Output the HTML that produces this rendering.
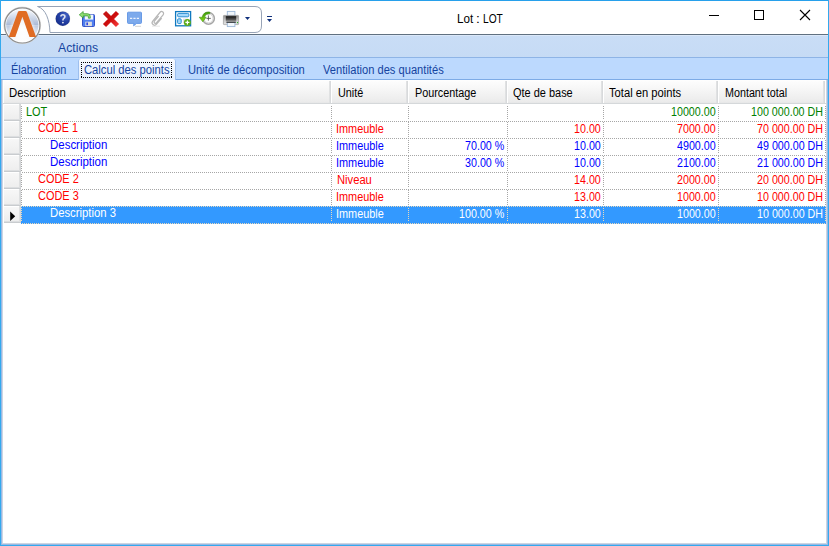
<!DOCTYPE html>
<html><head><meta charset="utf-8"><title>Lot : LOT</title>
<style>
html,body{margin:0;padding:0;background:#fff;}
#win{position:relative;width:829px;height:546px;overflow:hidden;background:#fff;font-family:"Liberation Sans",sans-serif;}
#win div,#win svg{position:absolute;}
.t{font-size:12px;line-height:20px;height:20px;white-space:nowrap;transform-origin:0 0;}
/* dotted grid lines: checkerboard (x+y odd) */
.hd{height:1px;background-image:linear-gradient(90deg,#a6a6a6 50%,rgba(0,0,0,0) 50%);background-size:2px 1px;}
.vd{width:1px;background-image:linear-gradient(180deg,#a6a6a6 50%,rgba(0,0,0,0) 50%);background-size:1px 2px;}
.hd.s{background-image:linear-gradient(90deg,#e9d9b9 50%,rgba(0,0,0,0) 50%);}
.vd.s{background-image:linear-gradient(180deg,#e9d9b9 50%,rgba(0,0,0,0) 50%);}
.rh{left:3px;width:18px;height:17px;background:linear-gradient(180deg,#ffffff 0,#ffffff 1px,#f7f7f7 1px,#eeeeee 15px,#dcdee0 15.5px,#c9cccf 16px,#c9cccf 17px);}
.rh:before{content:"";position:absolute;left:0;top:0;width:1px;height:17px;background:#fff;}
.rh:after{content:"";position:absolute;right:0;top:0;width:2px;height:16px;background:linear-gradient(90deg,#e2e3e4,#d0d2d4);}
.hc{top:80px;height:24px;background:linear-gradient(180deg,#ffffff 0,#fdfdfd 1px,#f4f4f4 12px,#ebebeb 22px,#e4e5e6 23px,#d5d8da 23px,#d5d8da 24px);}
.hs{top:81px;height:22px;width:2px;background:linear-gradient(90deg,#e4e5e6,#d4d6d8);}
.hw{top:80px;height:23px;width:1px;background:#fff;}
</style></head><body>
<div id="win">
<!-- title bar -->
<div style="left:0;top:0;width:829px;height:34px;background:#fff"></div>
<div style="left:0;top:34px;width:829px;height:1px;background:#607080"></div>
<!-- menu zone -->
<div style="left:0;top:35px;width:829px;height:22px;background:linear-gradient(180deg,#dbe8f9 0,#dbe8f9 1px,#c9ddf6 1px,#c6dbf5 22px)"></div>
<div style="left:0;top:57px;width:829px;height:1px;background:#8eb4e6"></div>
<!-- tab zone -->
<div style="left:0;top:58px;width:829px;height:21px;background:#bcd9fe"></div>
<div style="left:0;top:79px;width:829px;height:1px;background:#7dabe6"></div>
<!-- selected tab -->
<div style="left:78px;top:59px;width:98px;height:21px;background:#9dbfee;border-radius:3px 3px 0 0"></div>
<div style="left:79px;top:59px;width:96px;height:21px;background:linear-gradient(180deg,#ffffff 0,#f3f7fe 3px,#e6effc 21px);border-radius:2px 2px 0 0"></div>
<!-- focus rect -->
<div class="hd" style="left:81px;top:62px;width:91px;background-image:linear-gradient(90deg,#000 50%,rgba(0,0,0,0) 50%)"></div>
<div class="hd" style="left:81px;top:77px;width:91px;background-image:linear-gradient(90deg,#000 50%,rgba(0,0,0,0) 50%)"></div>
<div class="vd" style="left:81px;top:62px;height:16px;background-image:linear-gradient(180deg,#000 50%,rgba(0,0,0,0) 50%)"></div>
<div class="vd" style="left:171px;top:62px;height:16px;background-image:linear-gradient(180deg,#000 50%,rgba(0,0,0,0) 50%)"></div>

<!-- grid header -->
<div class="hc" style="left:3px;width:823px"></div>
<div class="hs" style="left:329px"></div><div class="hw" style="left:331px"></div>
<div class="hs" style="left:406px"></div><div class="hw" style="left:408px"></div>
<div class="hs" style="left:505px"></div><div class="hw" style="left:507px"></div>
<div class="hs" style="left:601px"></div><div class="hw" style="left:603px"></div>
<div class="hs" style="left:716px"></div><div class="hw" style="left:718px"></div>
<div class="hs" style="left:823px"></div><div class="hw" style="left:825px;width:1px"></div>
<div class="hw" style="left:3px"></div>

<!-- row headers -->
<div class="rh" style="top:104px"></div>
<div class="rh" style="top:121px"></div>
<div class="rh" style="top:138px"></div>
<div class="rh" style="top:155px"></div>
<div class="rh" style="top:172px"></div>
<div class="rh" style="top:189px"></div>
<div class="rh" style="top:206px"></div>
<!-- current row arrow -->
<svg style="left:9px;top:211px" width="8" height="11" viewBox="0 0 8 11"><path d="M1.2 0.6 L6.2 5.3 L1.2 10 Z" fill="#000"/></svg>

<!-- selected row -->
<div style="left:21px;top:206px;width:805px;height:18px;background:#3399ff"></div>

<div class="hd" style="left:22px;top:121px;width:803px"></div>
<div class="hd" style="left:22px;top:138px;width:803px"></div>
<div class="hd" style="left:22px;top:155px;width:803px"></div>
<div class="hd" style="left:22px;top:172px;width:803px"></div>
<div class="hd" style="left:22px;top:189px;width:803px"></div>
<div class="hd s" style="left:21px;top:206px;width:805px"></div>
<div class="hd s" style="left:22px;top:223px;width:804px"></div>
<div class="vd" style="left:21px;top:106px;height:13px"></div>
<div class="vd" style="left:21px;top:122px;height:15px"></div>
<div class="vd" style="left:21px;top:140px;height:13px"></div>
<div class="vd" style="left:21px;top:156px;height:15px"></div>
<div class="vd" style="left:21px;top:174px;height:13px"></div>
<div class="vd" style="left:21px;top:190px;height:15px"></div>
<div class="vd s" style="left:21px;top:208px;height:13px"></div>
<div class="vd" style="left:331px;top:106px;height:13px"></div>
<div class="vd" style="left:331px;top:122px;height:15px"></div>
<div class="vd" style="left:331px;top:140px;height:13px"></div>
<div class="vd" style="left:331px;top:156px;height:15px"></div>
<div class="vd" style="left:331px;top:174px;height:13px"></div>
<div class="vd" style="left:331px;top:190px;height:15px"></div>
<div class="vd s" style="left:331px;top:208px;height:13px"></div>
<div class="vd" style="left:408px;top:106px;height:13px"></div>
<div class="vd" style="left:408px;top:122px;height:15px"></div>
<div class="vd" style="left:408px;top:140px;height:13px"></div>
<div class="vd" style="left:408px;top:156px;height:15px"></div>
<div class="vd" style="left:408px;top:174px;height:13px"></div>
<div class="vd" style="left:408px;top:190px;height:15px"></div>
<div class="vd s" style="left:408px;top:208px;height:13px"></div>
<div class="vd" style="left:507px;top:106px;height:13px"></div>
<div class="vd" style="left:507px;top:122px;height:15px"></div>
<div class="vd" style="left:507px;top:140px;height:13px"></div>
<div class="vd" style="left:507px;top:156px;height:15px"></div>
<div class="vd" style="left:507px;top:174px;height:13px"></div>
<div class="vd" style="left:507px;top:190px;height:15px"></div>
<div class="vd s" style="left:507px;top:208px;height:13px"></div>
<div class="vd" style="left:603px;top:106px;height:13px"></div>
<div class="vd" style="left:603px;top:122px;height:15px"></div>
<div class="vd" style="left:603px;top:140px;height:13px"></div>
<div class="vd" style="left:603px;top:156px;height:15px"></div>
<div class="vd" style="left:603px;top:174px;height:13px"></div>
<div class="vd" style="left:603px;top:190px;height:15px"></div>
<div class="vd s" style="left:603px;top:208px;height:13px"></div>
<div class="vd" style="left:718px;top:106px;height:13px"></div>
<div class="vd" style="left:718px;top:122px;height:15px"></div>
<div class="vd" style="left:718px;top:140px;height:13px"></div>
<div class="vd" style="left:718px;top:156px;height:15px"></div>
<div class="vd" style="left:718px;top:174px;height:13px"></div>
<div class="vd" style="left:718px;top:190px;height:15px"></div>
<div class="vd s" style="left:718px;top:208px;height:13px"></div>
<div class="vd" style="left:825px;top:106px;height:13px"></div>
<div class="vd" style="left:825px;top:122px;height:15px"></div>
<div class="vd" style="left:825px;top:140px;height:13px"></div>
<div class="vd" style="left:825px;top:156px;height:15px"></div>
<div class="vd" style="left:825px;top:174px;height:13px"></div>
<div class="vd" style="left:825px;top:190px;height:15px"></div>
<div class="vd s" style="left:825px;top:208px;height:13px"></div>

<svg style="left:0;top:0" width="829" height="46" viewBox="0 0 829 46">
<defs>
<linearGradient id="orbTop" x1="0" y1="0" x2="0" y2="1"><stop offset="0" stop-color="#fbfcfe"/><stop offset="0.35" stop-color="#dde4f0"/><stop offset="1" stop-color="#a9b8d4"/></linearGradient>
<linearGradient id="orbBot" x1="0" y1="0" x2="0" y2="1"><stop offset="0" stop-color="#bcc8de"/><stop offset="0.75" stop-color="#f4f6fa"/><stop offset="1" stop-color="#ffffff"/></linearGradient>
<radialGradient id="orbGlow" cx="0.5" cy="0.62" r="0.42"><stop offset="0" stop-color="#ffffff" stop-opacity="1"/><stop offset="0.6" stop-color="#ffffff" stop-opacity="0.85"/><stop offset="1" stop-color="#ffffff" stop-opacity="0"/></radialGradient>
<radialGradient id="helpG" cx="0.65" cy="0.3" r="0.8"><stop offset="0" stop-color="#4a68c8"/><stop offset="0.5" stop-color="#2440a4"/><stop offset="1" stop-color="#142c88"/></radialGradient>
<linearGradient id="redG" x1="0" y1="0" x2="1" y2="1"><stop offset="0" stop-color="#c41818"/><stop offset="0.5" stop-color="#cc0c0c"/><stop offset="1" stop-color="#f43838"/></linearGradient>
<linearGradient id="prnG" x1="0" y1="0" x2="0" y2="1"><stop offset="0" stop-color="#8c8c8c"/><stop offset="0.5" stop-color="#c4c4c4"/><stop offset="1" stop-color="#e6e6e6"/></linearGradient>
<linearGradient id="slotG" x1="0" y1="0" x2="0" y2="1"><stop offset="0" stop-color="#101010"/><stop offset="1" stop-color="#707070"/></linearGradient>
<linearGradient id="grnG" x1="0" y1="0" x2="0" y2="1"><stop offset="0" stop-color="#3c9808"/><stop offset="1" stop-color="#88d818"/></linearGradient>
</defs>
<!-- QAT outline -->
<path d="M37.5 6.5 H255 Q261.5 6.5 261.5 13 V26 Q261.5 32.5 255 32.5 H50 C49.5 20 46 9 37.5 6.5 Z" fill="#fff" stroke="#97a3b6" stroke-width="1"/>
<!-- orb -->
<circle cx="22.3" cy="25.4" r="18.3" fill="none" stroke="#dcdcdc" stroke-width="1"/>
<circle cx="22.3" cy="25.4" r="17.6" fill="#fff" stroke="#8c8c8c" stroke-width="1.2"/>
<path d="M6.1 25.3 A16.2 16.2 0 0 1 38.5 25.3 Z" fill="url(#orbTop)"/>
<path d="M6.1 25.3 A16.2 16.2 0 0 0 38.5 25.3 Z" fill="url(#orbBot)"/>
<circle cx="22.3" cy="25.3" r="16.2" fill="url(#orbGlow)"/>
<path d="M19.6 11 H25.2 Q26.6 11 27.1 12.4 L36.1 37 H29.5 L22.4 16.8 L15.3 37 H8.7 L17.7 12.4 Q18.2 11 19.6 11 Z" fill="#e06c24"/>
<!-- help -->
<circle cx="62.8" cy="18.7" r="7.6" fill="#f0ece4"/>
<circle cx="62.8" cy="18.7" r="7.2" fill="url(#helpG)"/>
<path d="M60.9 16.6 Q60.9 14.7 62.9 14.7 Q64.9 14.7 64.9 16.4 Q64.9 17.5 63.8 18.3 Q62.9 19 62.9 20.4" fill="none" stroke="#dfe3ee" stroke-width="1.6"/>
<circle cx="62.9" cy="22.6" r="0.95" fill="#dfe3ee"/>
<!-- save (floppy + green arrow) -->
<rect x="82.5" y="14.5" width="12" height="12" rx="1" fill="#4f7ff0" stroke="#3350c6" stroke-width="1"/>
<rect x="84.8" y="14.6" width="8.4" height="5" fill="#f2f6ff"/>
<rect x="85.3" y="21.7" width="6.6" height="4.4" fill="#dedede"/>
<rect x="86.4" y="22.5" width="1.5" height="2.7" fill="#1c34e0"/>
<path d="M79.3 14.8 L83.2 11.5 V13.7 H87.4 Q90.3 13.7 90.3 16.5 V18.2 H88.4 V16.8 Q88.4 15.9 87.4 15.9 H83.2 V18.1 Z" fill="#8edc72" stroke="#3a9a2c" stroke-width="0.75"/>
<!-- red X -->
<path d="M104.5 12.5 L117.5 25.5 M117.5 12.5 L104.5 25.5" stroke="url(#redG)" stroke-width="4.4" fill="none"/>
<!-- comment -->
<path d="M127.5 13 Q127.5 12.2 128.3 12.2 H140.7 Q141.5 12.2 141.5 13 V22.6 Q141.5 23.4 140.7 23.4 H136.6 L133.6 25.8 L134 23.4 H128.3 Q127.5 23.4 127.5 22.6 Z" fill="#7daaec" stroke="#5f93e4" stroke-width="0.9"/>
<path d="M135 26.3 H141" stroke="#c8c8c8" stroke-width="0.8"/>
<path d="M130 18.4 H132.2 M133.4 18.4 H135.6 M136.8 18.4 H139" stroke="#eef4ff" stroke-width="1.1"/>
<!-- paperclip -->
<g transform="translate(157.8 18.2) rotate(40) scale(0.86)"><path d="M-0.8 -2.5 V5.2 A1.5 1.5 0 0 0 2.2 5.2 V-7 A2.3 2.3 0 0 0 -2.4 -7 V6.3 A2.9 2.9 0 0 0 3.4 6.3 V-3" fill="none" stroke="#b6b6b6" stroke-width="1.4"/></g>
<path d="M152 26.2 H160" stroke="#e0e0e0" stroke-width="0.8"/>
<!-- layout icon -->
<rect x="175.6" y="11.6" width="15" height="14.2" fill="#fff" stroke="#1079c0" stroke-width="1.3"/>
<rect x="177.6" y="13.4" width="11.2" height="3.4" rx="1" fill="#a4d8fc" stroke="#1a84cc" stroke-width="0.9"/>
<rect x="177.6" y="18.8" width="3.6" height="4.8" rx="1" fill="#a4d8fc" stroke="#1a84cc" stroke-width="0.9"/>
<rect x="183" y="18.6" width="5" height="5" fill="#e4e0e8"/>
<circle cx="187.4" cy="22.4" r="3.5" fill="#5cac18"/>
<path d="M185.4 22.4 H189.4 M187.4 20.4 V24.4" stroke="#fff" stroke-width="1.2"/>
<!-- clock + green arrow -->
<circle cx="208.5" cy="18.4" r="5.8" fill="#fff" stroke="#a6a6a6" stroke-width="1.6"/>
<circle cx="208.5" cy="18.4" r="4.5" fill="#fff" stroke="#d6d6d6" stroke-width="1"/>
<path d="M208.4 15.4 V20.6 M206.4 18.4 H210.8" stroke="#484848" stroke-width="0.8"/>
<path d="M209.8 12 Q203.4 11.2 202.2 17.2 H199.2 L202.8 21.8 L206.2 17.2 H204.4 Q205.4 13.6 209.8 13.8 Z" fill="url(#grnG)" stroke="#3c9010" stroke-width="0.5"/>
<!-- printer -->
<rect x="227.3" y="11.4" width="7.6" height="4.4" fill="#f0f6fc" stroke="#9cb8d8" stroke-width="0.9"/>
<rect x="223.4" y="15.4" width="15.2" height="9.2" rx="0.6" fill="url(#prnG)" stroke="#8e8e8e" stroke-width="0.6"/>
<rect x="225.8" y="16.2" width="10.4" height="4.6" fill="url(#slotG)"/>
<rect x="227.3" y="22.4" width="7.6" height="4.2" fill="#f0f6fc" stroke="#9cb8d8" stroke-width="0.9"/>
<rect x="226.4" y="21.6" width="9.4" height="1.2" fill="#303030"/>
<rect x="237" y="22" width="1" height="1.2" fill="#28b028"/>
<!-- dropdown arrow -->
<path d="M245 17 H250 L247.5 20 Z" fill="#10307c"/>
<!-- customize glyph -->
<rect x="267" y="16" width="5" height="1" fill="#10307c"/>
<path d="M267 19 H272 L269.5 22 Z" fill="#10307c"/>
<!-- window controls -->
<rect x="709" y="15" width="10" height="1" fill="#000"/>
<rect x="754.5" y="10.5" width="9" height="9" fill="none" stroke="#000" stroke-width="1"/>
<path d="M800 10 L810 20 M810 10 L800 20" stroke="#000" stroke-width="1.1"/>
</svg>


<div class="t" style="left:457.25px;top:9px;transform:scaleX(0.9684);color:#000">Lot</div>
<div class="t" style="left:475.90px;top:9px;transform:scaleX(1.1500);color:#000">:</div>
<div class="t" style="left:483.15px;top:9px;transform:scaleX(0.8497);color:#000">LOT</div>
<div class="t" style="left:58.35px;top:38px;transform:scaleX(1.0190);color:#1444a0">Actions</div>
<div class="t" style="left:10.65px;top:60px;transform:scaleX(0.9111);color:#1444a0">Élaboration</div>
<div class="t" style="left:84.25px;top:60px;transform:scaleX(0.9367);color:#1444a0">Calcul des points</div>
<div class="t" style="left:188.15px;top:60px;transform:scaleX(0.9316);color:#1444a0">Unité de décomposition</div>
<div class="t" style="left:322.95px;top:60px;transform:scaleX(0.9278);color:#1444a0">Ventilation des quantités</div>
<div class="t" style="left:8.55px;top:83px;transform:scaleX(0.9469);color:#000">Description</div>
<div class="t" style="left:337.65px;top:83px;transform:scaleX(0.8998);color:#000">Unité</div>
<div class="t" style="left:414.65px;top:83px;transform:scaleX(0.9009);color:#000">Pourcentage</div>
<div class="t" style="left:513.15px;top:83px;transform:scaleX(0.9132);color:#000">Qte de base</div>
<div class="t" style="left:609.15px;top:83px;transform:scaleX(0.9330);color:#000">Total en points</div>
<div class="t" style="left:724.65px;top:83px;transform:scaleX(0.8951);color:#000">Montant total</div>
<div class="t" style="left:26.15px;top:102px;transform:scaleX(0.9122);color:#008000">LOT</div>
<div class="t" style="left:37.85px;top:118px;transform:scaleX(0.8933);color:#ff0000">CODE 1</div>
<div class="t" style="left:50.45px;top:135px;transform:scaleX(0.9554);color:#0000ff">Description</div>
<div class="t" style="left:50.45px;top:152px;transform:scaleX(0.9554);color:#0000ff">Description</div>
<div class="t" style="left:37.85px;top:169px;transform:scaleX(0.9133);color:#ff0000">CODE 2</div>
<div class="t" style="left:37.85px;top:186px;transform:scaleX(0.9133);color:#ff0000">CODE 3</div>
<div class="t" style="left:50.45px;top:203px;transform:scaleX(0.9423);color:#ffffff">Description 3</div>
<div class="t" style="left:336.04px;top:119px;transform:scaleX(0.9075);color:#ff0000">Immeuble</div>
<div class="t" style="left:336.04px;top:136px;transform:scaleX(0.9075);color:#0000ff">Immeuble</div>
<div class="t" style="left:336.04px;top:153px;transform:scaleX(0.9075);color:#0000ff">Immeuble</div>
<div class="t" style="left:336.95px;top:170px;transform:scaleX(0.9324);color:#ff0000">Niveau</div>
<div class="t" style="left:336.04px;top:187px;transform:scaleX(0.9075);color:#ff0000">Immeuble</div>
<div class="t" style="left:336.04px;top:204px;transform:scaleX(0.9075);color:#ffffff">Immeuble</div>
<div class="t" style="left:464.83px;top:136px;transform:scaleX(0.8920);color:#0000ff">70.00 %</div>
<div class="t" style="left:464.83px;top:153px;transform:scaleX(0.8920);color:#0000ff">30.00 %</div>
<div class="t" style="left:458.87px;top:204px;transform:scaleX(0.8920);color:#ffffff">100.00 %</div>
<div class="t" style="left:573.52px;top:119px;transform:scaleX(0.8920);color:#ff0000">10.00</div>
<div class="t" style="left:573.52px;top:136px;transform:scaleX(0.8920);color:#0000ff">10.00</div>
<div class="t" style="left:573.52px;top:153px;transform:scaleX(0.8920);color:#0000ff">10.00</div>
<div class="t" style="left:573.52px;top:170px;transform:scaleX(0.8920);color:#ff0000">14.00</div>
<div class="t" style="left:573.52px;top:187px;transform:scaleX(0.8920);color:#ff0000">13.00</div>
<div class="t" style="left:573.52px;top:204px;transform:scaleX(0.8920);color:#ffffff">13.00</div>
<div class="t" style="left:670.66px;top:102px;transform:scaleX(0.8920);color:#008000">10000.00</div>
<div class="t" style="left:676.62px;top:119px;transform:scaleX(0.8920);color:#ff0000">7000.00</div>
<div class="t" style="left:676.62px;top:136px;transform:scaleX(0.8920);color:#0000ff">4900.00</div>
<div class="t" style="left:676.62px;top:153px;transform:scaleX(0.8920);color:#0000ff">2100.00</div>
<div class="t" style="left:676.62px;top:170px;transform:scaleX(0.8920);color:#ff0000">2000.00</div>
<div class="t" style="left:676.62px;top:187px;transform:scaleX(0.8920);color:#ff0000">1000.00</div>
<div class="t" style="left:676.62px;top:204px;transform:scaleX(0.8920);color:#ffffff">1000.00</div>
<div class="t" style="left:751.39px;top:102px;transform:scaleX(0.8920);color:#008000">100 000.00 DH</div>
<div class="t" style="left:757.34px;top:119px;transform:scaleX(0.8920);color:#ff0000">70 000.00 DH</div>
<div class="t" style="left:757.34px;top:136px;transform:scaleX(0.8920);color:#0000ff">49 000.00 DH</div>
<div class="t" style="left:757.34px;top:153px;transform:scaleX(0.8920);color:#0000ff">21 000.00 DH</div>
<div class="t" style="left:757.34px;top:170px;transform:scaleX(0.8920);color:#ff0000">20 000.00 DH</div>
<div class="t" style="left:757.34px;top:187px;transform:scaleX(0.8920);color:#ff0000">10 000.00 DH</div>
<div class="t" style="left:757.34px;top:204px;transform:scaleX(0.8920);color:#ffffff">10 000.00 DH</div>

<!-- window border -->
<div style="left:0;top:0;width:829px;height:1px;background:#27a0eb"></div>
<div style="left:0;top:0;width:1px;height:546px;background:#33a9ee"></div>
<div style="left:828px;top:0;width:1px;height:546px;background:#33a9ee"></div>
<div style="left:0;top:545px;width:829px;height:1px;background:#33a9ee"></div>
<div style="left:1px;top:80px;width:1px;height:465px;background:#96b9e6"></div>
<div style="left:827px;top:80px;width:1px;height:465px;background:#96b9e6"></div>
<div style="left:2px;top:80px;width:1px;height:464px;background:#cdd5e1"></div>
<div style="left:826px;top:80px;width:1px;height:464px;background:#cdd5e1"></div>
<div style="left:1px;top:544px;width:827px;height:1px;background:#96b9e6"></div>
<div style="left:2px;top:543px;width:825px;height:1px;background:#cdd5e1"></div>
</div>
</body></html>
